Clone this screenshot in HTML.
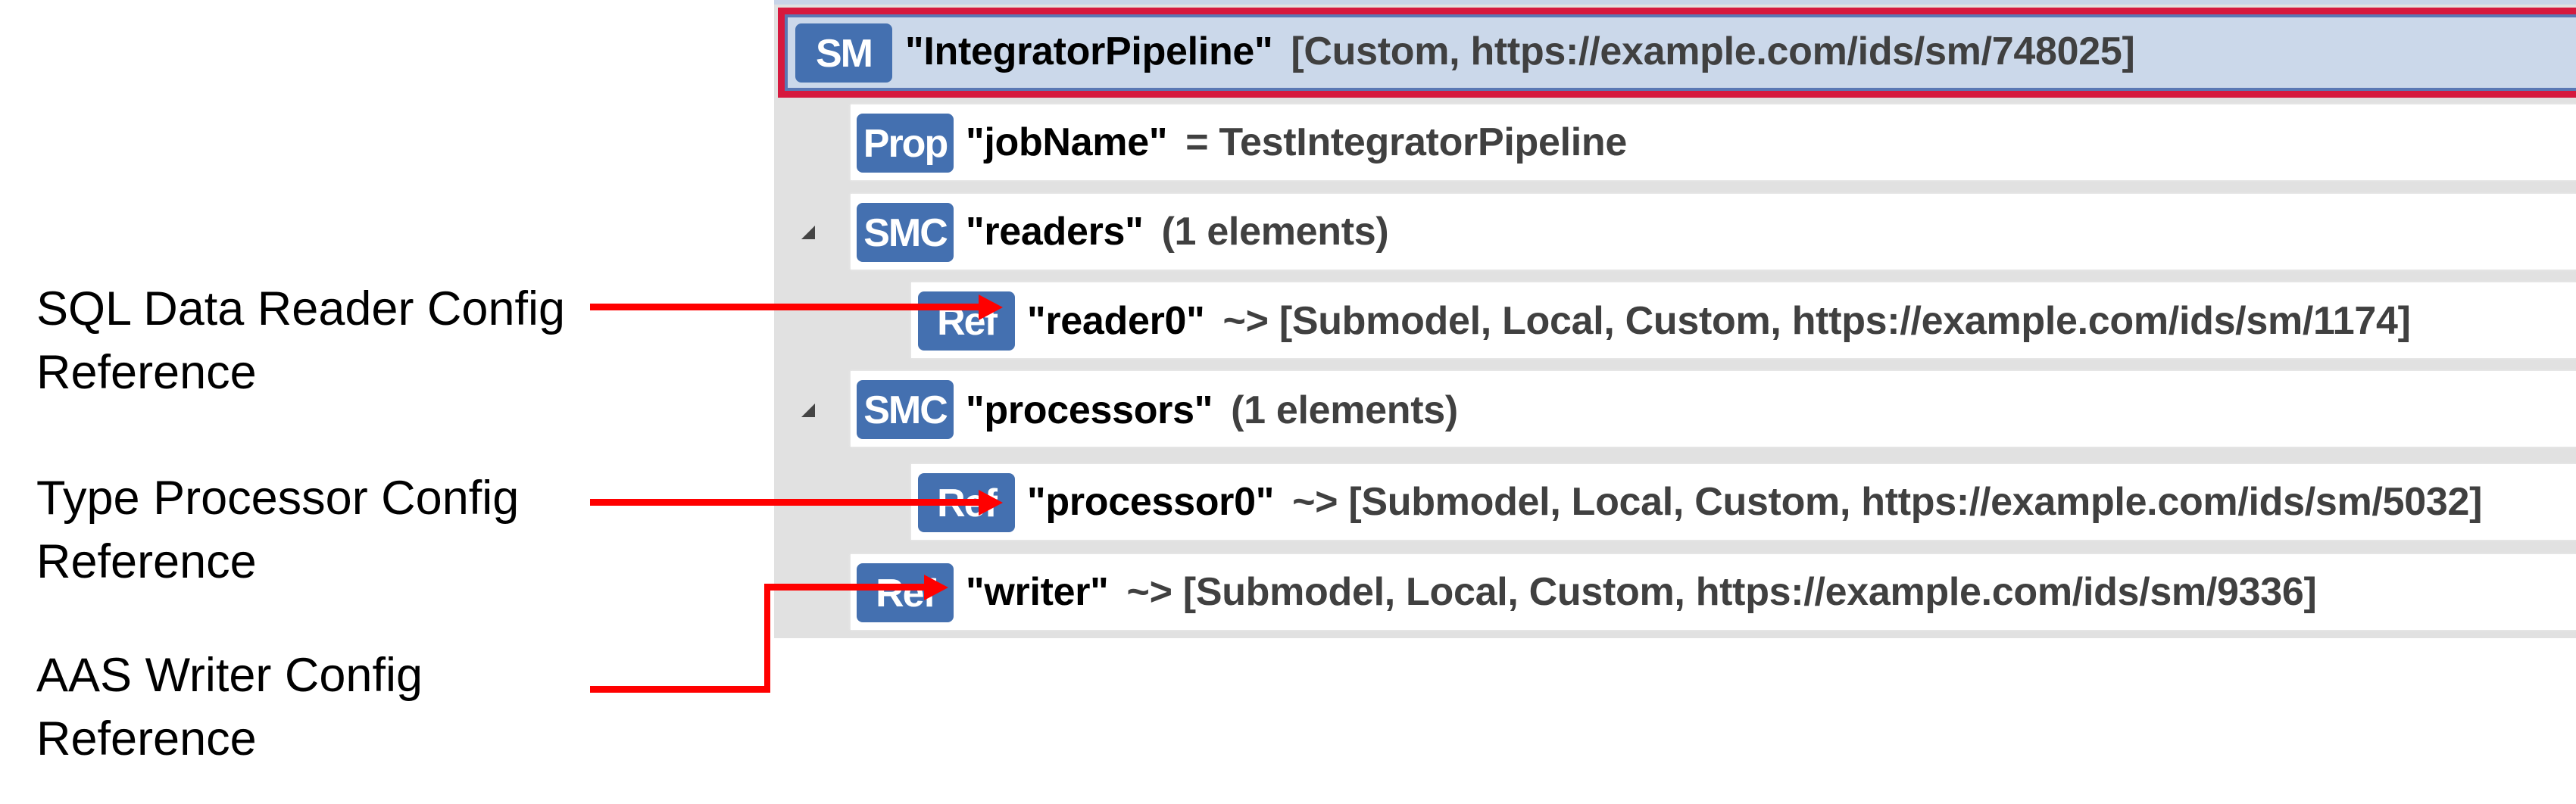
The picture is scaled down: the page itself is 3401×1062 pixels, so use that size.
<!DOCTYPE html>
<html><head><meta charset="utf-8"><style>
body{margin:0;width:3401px;height:1062px;background:#fff;position:relative;overflow:hidden;font-family:"Liberation Sans",sans-serif}
.a{position:absolute}
.panel{left:1022px;top:0;width:2379px;height:843px;background:#e1e1e1}
.row{position:absolute;background:#fff;height:100px;right:0;box-shadow:0 0 3px #f0f0f0}
.b{position:absolute;background:#4470b0;color:#fff;font-weight:bold;border-radius:8px;width:128px;height:78px;line-height:80px;text-align:center;font-size:52px;letter-spacing:-2px;overflow:hidden}
.t{position:absolute;font-weight:bold;font-size:52px;white-space:nowrap;color:#000;line-height:56px;letter-spacing:-0.3px}
.t span{color:#404040;margin-left:24px}
.lab{position:absolute;left:48px;font-size:63px;line-height:84px;color:#000}
.tri{position:absolute;width:0;height:0;border-left:18px solid transparent;border-bottom:18px solid #444}
</style></head><body>
<div class="a panel"></div>
<div class="a" style="left:1022px;top:0;width:2379px;height:6px;background:#c8d4e8"></div>
<div class="a" style="left:1027px;top:10px;width:2374px;height:119px;background:#d6193e"></div>
<div class="a" style="left:1036px;top:19px;width:2365px;height:101px;background:#5a78b4"></div>
<div class="a" style="left:1040px;top:23px;width:2361px;height:93px;background:#cbd8ea"></div>
<div class="b" style="left:1050px;top:31px">SM</div>
<div class="t" style="left:1195px;top:40px">"IntegratorPipeline"<span>[Custom, https://example.com/ids/sm/748025]</span></div>

<div class="row" style="left:1123px;top:138px"></div>
<div class="b" style="left:1131px;top:150px">Prop</div>
<div class="t" style="left:1275px;top:160px">"jobName"<span>= TestIntegratorPipeline</span></div>

<div class="tri" style="left:1058px;top:298px"></div>
<div class="row" style="left:1123px;top:256px"></div>
<div class="b" style="left:1131px;top:268px">SMC</div>
<div class="t" style="left:1275px;top:278px">"readers"<span>(1 elements)</span></div>

<div class="row" style="left:1203px;top:373px"></div>
<div class="b" style="left:1212px;top:385px">Ref</div>
<div class="t" style="left:1356px;top:396px">"reader0"<span>~&gt; [Submodel, Local, Custom, https://example.com/ids/sm/1174]</span></div>

<div class="tri" style="left:1058px;top:533px"></div>
<div class="row" style="left:1123px;top:490px"></div>
<div class="b" style="left:1131px;top:502px">SMC</div>
<div class="t" style="left:1275px;top:514px">"processors"<span>(1 elements)</span></div>

<div class="row" style="left:1203px;top:613px"></div>
<div class="b" style="left:1212px;top:625px">Ref</div>
<div class="t" style="left:1356px;top:635px">"processor0"<span>~&gt; [Submodel, Local, Custom, https://example.com/ids/sm/5032]</span></div>

<div class="row" style="left:1123px;top:732px"></div>
<div class="b" style="left:1131px;top:744px">Ref</div>
<div class="t" style="left:1275px;top:754px">"writer"<span>~&gt; [Submodel, Local, Custom, https://example.com/ids/sm/9336]</span></div>

<div class="lab" style="top:366px">SQL Data Reader Config<br>Reference</div>
<div class="lab" style="top:616px">Type Processor Config<br>Reference</div>
<div class="lab" style="top:850px">AAS Writer Config<br>Reference</div>

<svg class="a" style="left:0;top:0" width="3401" height="1062">
<g fill="#f00" stroke="none">
<rect x="779" y="401" width="520" height="9"/>
<polygon points="1292,389 1324,406 1292,423"/>
<rect x="779" y="659" width="520" height="9"/>
<polygon points="1292,647 1324,664 1292,681"/>
<rect x="779" y="906" width="238" height="9"/>
<rect x="1009" y="771" width="8" height="144"/>
<rect x="1009" y="771" width="218" height="9"/>
<polygon points="1220,759 1252,776 1220,793"/>
</g>
</svg>
</body></html>
